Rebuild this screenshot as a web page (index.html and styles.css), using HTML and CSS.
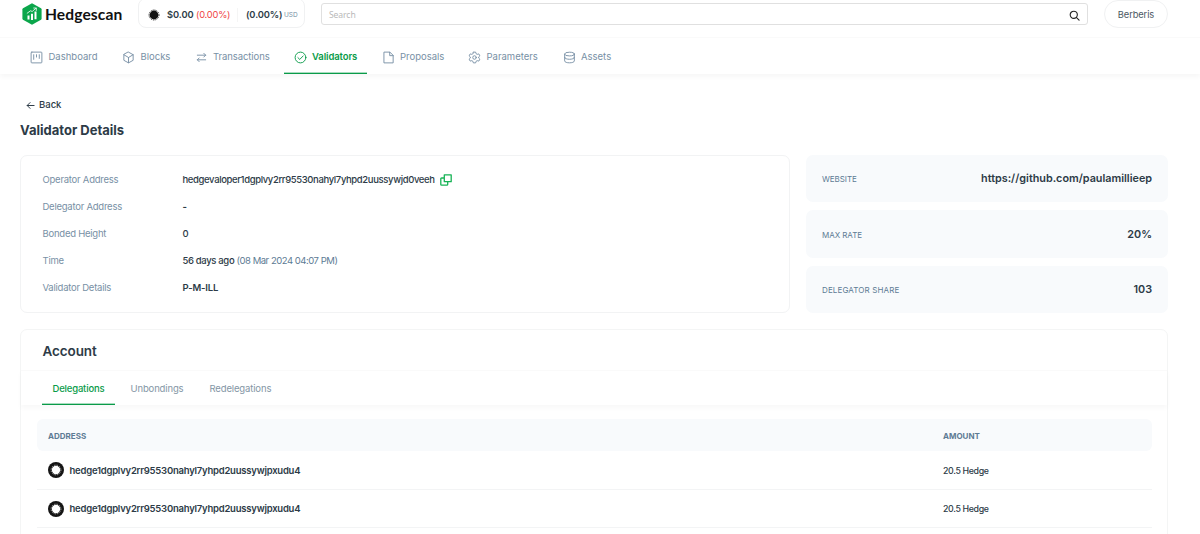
FILE: index.html
```
<!DOCTYPE html>
<html lang="en">
<head>
<meta charset="utf-8">
<title>Hedgescan</title>
<link rel="stylesheet" href="styles.css">
</head>
<body>
<svg class="defs" width="0" height="0">
  <symbol id="avatar" viewBox="0 0 16 16"><circle cx="8" cy="8" r="8" fill="#151515"/><circle cx="8" cy="8" r="4.900" fill="none" stroke="#aaa" stroke-width="1" stroke-linecap="butt" stroke-dasharray="1.300 1.270"/><circle cx="8" cy="8" r="4.200" fill="#fff"/></symbol>
</svg>
<header class="topbar">
  <a class="brand">
    <svg class="brand-mark" viewBox="0 0 20 22"><path d="M10 0.2 19 5.2Q19.6 5.6 19.6 6.3V15.7Q19.6 16.4 19 16.8L10 21.8 1 16.8Q.4 16.4.4 15.7V6.3Q.4 5.6 1 5.2Z" fill="#0ba64b"/><path d="M6.5 16.5V12.5M10 17V10.7M13.5 16.3V8.5" stroke="#fff" stroke-width="2" stroke-linecap="butt" fill="none"/><path d="M5.2 10.2 8.5 7.8 10.2 8.5 14 5.2M11.7 5H14.3V7.5" stroke="#fff" stroke-width=".8" fill="none"/></svg>
    <span class="brand-name">Hedgescan</span>
  </a>
  <div class="ticker">
    <svg class="coin" viewBox="0 0 12 12"><circle cx="6" cy="6" r="4.4" fill="#111"/><circle cx="6" cy="6" r="5" fill="none" stroke="#222" stroke-width="1" stroke-linecap="butt" stroke-dasharray="1 .96"/></svg>
    <span class="price">$0.00</span><span class="change">(0.00%)</span>
    <span class="supply">(0.00%)</span><span class="usd">USD</span>
  </div>
  <div class="search"><span>Search</span>
    <svg class="search-icon" viewBox="0 0 12 12"><circle cx="5.2" cy="5.2" r="3.9"/><path d="m8 8 3 3"/></svg>
  </div>
  <div class="network">Berberis</div>
</header>
<nav class="nav">
  <a class="nav-item"><svg viewBox="0 0 14 14"><rect x="1.2" y="1.2" width="11.6" height="11.6" rx=".8"/><path d="M4 4v5M7 4v2.5M10 4v4"/></svg><span>Dashboard</span></a>
  <a class="nav-item"><svg viewBox="0 0 14 14"><path d="M7 1.2 12 4v6L7 12.8 2 10V4ZM2 4l5 3 5-3M7 7v5.5"/></svg><span>Blocks</span></a>
  <a class="nav-item"><svg viewBox="0 0 14 14"><path d="M2.500 4.500h9M9.500 2.500 11.500 4.500 9.500 6.500M11.500 9.500h-9M4.500 7.500 2.500 9.500 4.500 11.500"/></svg><span class="transactions">Transactions</span></a>
  <a class="nav-item active"><svg viewBox="0 0 14 14"><circle cx="7" cy="7" r="5.8"/><path d="m4.2 7.1 2 2 3.7-3.8"/></svg><span>Validators</span></a>
  <a class="nav-item"><svg viewBox="0 0 14 14"><path d="M2.5 1.2h6L12 4.7v8.1H2.5ZM8.3 1.4V5H12"/></svg><span>Proposals</span></a>
  <a class="nav-item"><svg viewBox="0 0 14 14"><circle cx="7" cy="7" r="1.9"/><path d="M5.8 1.2h2.4l.5 1.7 1.2.7 1.7-.5 1.2 2.1L11.5 6.400V7.600l1.300 1.200-1.200 2.100-1.700-.5-1.200.7-.5 1.700H5.800l-.5-1.700-1.200-.7-1.700.5L1.200 8.800l1.300-1.200V6.400L1.200 5.200l1.200-2.100 1.700.5 1.200-.7Z"/></svg><span>Parameters</span></a>
  <a class="nav-item"><svg viewBox="0 0 14 14"><ellipse cx="7" cy="3.300" rx="5.200" ry="2"/><path d="M1.800 3.300v7.400c0 2.700 10.400 2.700 10.400 0V3.300M1.800 7c0 2.700 10.400 2.700 10.400 0"/></svg><span>Assets</span></a>
</nav>
<main class="page">
  <a class="back"><svg viewBox="0 0 10 10"><path d="M9 5H1.500M4.500 1.800 1.300 5l3.200 3.200"/></svg><span>Back</span></a>
  <h1 class="title">Validator Details</h1>
  <section class="overview">
    <dl class="details">
      <dt>Operator Address</dt><dd><span class="operator">hedgevaloper1dgplvy2rr95530nahyl7yhpd2uussywjd0veeh</span><svg class="copy" viewBox="0 0 12 12"><path d="M4.300 .8h6.900v6.900H4.300ZM4.300 4H1.600Q.8 4 .8 4.800v5.600q0 .8.8.8h5.300q.8 0 .8-.8V7.700"/></svg></dd>
      <dt>Delegator Address</dt><dd class="strong">-</dd>
      <dt>Bonded Height</dt><dd>0</dd>
      <dt>Time</dt><dd><span class="ago">56 days ago</span><span class="date">(08 Mar 2024 04:07 PM)</span></dd>
      <dt>Validator Details</dt><dd class="strong moniker">P-M-ILL</dd>
    </dl>
    <div class="stats">
      <div class="stat"><span class="stat-label">WEBSITE</span><span class="stat-value">https://github.com/paulamillieep</span></div>
      <div class="stat"><span class="stat-label">MAX RATE</span><span class="stat-value">20%</span></div>
      <div class="stat"><span class="stat-label wide">DELEGATOR SHARE</span><span class="stat-value">103</span></div>
    </div>
  </section>
  <section class="account">
    <h2 class="account-title">Account</h2>
    <div class="tabs"><a class="tab selected">Delegations</a><a class="tab">Unbondings</a><a class="tab">Redelegations</a></div>
    <div class="table">
      <div class="row head"><span>ADDRESS</span><span>AMOUNT</span></div>
      <div class="row"><span class="address"><svg><use href="#avatar"/></svg><b>hedge1dgplvy2rr95530nahyl7yhpd2uussywjpxudu4</b></span><span class="amount">20.5 Hedge</span></div>
      <div class="row"><span class="address"><svg><use href="#avatar"/></svg><b>hedge1dgplvy2rr95530nahyl7yhpd2uussywjpxudu4</b></span><span class="amount">20.5 Hedge</span></div>
    </div>
  </section>
</main>
</body>
</html>
```
FILE: styles.css
```
* { box-sizing: border-box; }
body { margin: 0; height: 534px; overflow: hidden; background: #fff; color: #2d3b47; font: 500 9.5px/14px Inter, "Liberation Sans", sans-serif; white-space: nowrap; }
svg { flex: none; fill: none; stroke-linecap: round; stroke-linejoin: round; }
.defs { position: absolute; }

.topbar { display: flex; align-items: center; height: 38px; padding: 0 32px 9px 22px; border-bottom: 1px solid #fafafa; }
.brand { display: flex; align-items: center; width: 116px; gap: 2px; }
.brand-mark { width: 20px; height: 22px; }
.brand-name { color: #111; font: 700 15.600px/20px Lato, sans-serif; letter-spacing: .1px; padding-left: 1px; }
.ticker { display: flex; align-items: center; width: 167px; height: 30px; margin-top: -2px; padding: 3px 0 0 9px; border: 1px solid #f0f1f2; border-radius: 8px; font-size: 9.300px; }
.coin { width: 12px; height: 12px; margin-right: 7px; }
.price { width: 29px; font-weight: 600; letter-spacing: -.05px; }
.change { width: 41px; color: #f04444; font-weight: 400; letter-spacing: -.2px; }
.supply { width: 47px; padding-left: 8px; border-left: 1px solid #f5f5f5; font-weight: 600; letter-spacing: -.1px; }
.usd { color: #7890a5; font-size: 6.5px; font-weight: 400; }
.search { display: flex; align-items: center; justify-content: space-between; width: 767px; height: 22px; margin-left: 16px; padding: 2px 7px 0; border: 1px solid #e0e0e0; border-radius: 3px; color: #b9b9b9; font: 400 8.600px/14px "Noto Sans", sans-serif; letter-spacing: -.1px; }
.search-icon { width: 11px; height: 11px; stroke: #222; stroke-width: 1.2; }
.network { width: 64px; height: 28px; margin-left: 16px; border: 1px solid #f0f1f2; border-radius: 14px; text-align: center; line-height: 28px; font-size: 9.3px; letter-spacing: -.1px; color: #4b5863; font-weight: 400; }

.nav { display: grid; grid-template-columns: 92px 72.500px 99px 88px 86.500px 94.500px 80px; height: 36px; padding-left: 20px; box-shadow: 0 3px 5px rgba(0,0,0,.035); }
.nav-item { display: flex; align-items: center; justify-self: start; gap: 5.500px; padding: 3px 10px 0; border-bottom: 1px solid transparent; color: #7890a5; font-weight: 400; }
.nav-item svg { width: 13px; height: 13px; stroke: currentColor; stroke-width: 1; }
.nav-item.active { width: 83px; color: #0a9b49; border-color: #0a9b49; box-shadow: inset 0 -1px rgba(10,155,73,.35); font-weight: 600; letter-spacing: -.1px; }
.transactions { letter-spacing: -.08px; }

.page { padding: 24px 32px 0 20px; }
.back { display: flex; align-items: center; gap: 4px; padding-left: 6px; height: 14px; }
.back svg { width: 9px; height: 9px; stroke: #2d3b47; stroke-width: 1.100; }
.title { margin: 8px 0 15px; font-size: 13px; line-height: 20px; font-weight: 700; }
.overview { display: grid; grid-template-columns: 770px 362px; gap: 16px; height: 158px; }
.details { display: grid; grid-template-columns: 140px 1fr; grid-auto-rows: 27px; align-items: center; margin: 0; padding: 10px 21px; border: 1px solid #f2f3f4; border-radius: 7px; }
.details dt { padding-left: .5px; color: #7890a5; font-weight: 400; letter-spacing: -.24px; }
.details dd { display: flex; align-items: center; margin: 0; padding-left: .5px; }
.details .strong { font-weight: 700; }
.details .moniker { font-weight: 600; letter-spacing: -.15px; }
.operator { width: 257px; letter-spacing: -.37px; }
.copy { width: 12px; height: 12px; stroke: #16b355; stroke-width: 1.300; }
.ago { width: 54px; letter-spacing: -.35px; }
.date { color: #5d7b94; font-weight: 400; letter-spacing: -.47px; }
.stats { display: grid; grid-template-rows: repeat(3, 1fr); gap: 8px; }
.stat { display: flex; align-items: center; justify-content: space-between; padding: 1.500px 16px 0; border-radius: 7px; background: #f8fafc; }
.stat-label { color: #5d7b94; font-size: 8px; font-weight: 400; letter-spacing: -.05px; }
.stat-label.wide { letter-spacing: .12px; }
.stat-value { font-size: 10.800px; font-weight: 600; }

.account { height: 230px; margin-top: 16px; border: 1px solid #f4f5f5; border-radius: 7px; }
.account-title { margin: 0; padding: 11px 21px 9px; padding-left: 21.500px; font-size: 13.500px; line-height: 20px; font-weight: 600; letter-spacing: -.1px; }
.tabs { display: flex; gap: 5px; height: 35px; padding-left: 21px; border-top: 1px solid #fafafa; box-shadow: 0 3px 5px rgba(0,0,0,.03); }
.tab { padding: 11px 10.500px 0; color: #8496a5; font-weight: 400; letter-spacing: -.14px; }
.tab.selected { width: 73px; color: #0a9b49; border-bottom: 1px solid #0a9b49; box-shadow: inset 0 -1px rgba(10,155,73,.35); font-weight: 500; letter-spacing: -.18px; }
.table { padding: 14px 15px 0 16px; }
.row { display: grid; grid-template-columns: 895px 1fr; align-items: center; height: 38.500px; padding: 1px 0 0 11px; border-bottom: 1px solid #f3f4f5; }
.row.head { height: 32px; border: 0; border-radius: 6px; background: #f8fafc; color: #5d7b94; font-size: 8px; font-weight: 700; }
.address { display: flex; align-items: center; gap: 5.500px; }
.address svg { width: 16px; height: 16px; }
.address b { padding-top: 1px; font-weight: 600; letter-spacing: -.23px; }
.amount { padding-top: 1px; font-size: 8.800px; letter-spacing: -.33px; }
```
